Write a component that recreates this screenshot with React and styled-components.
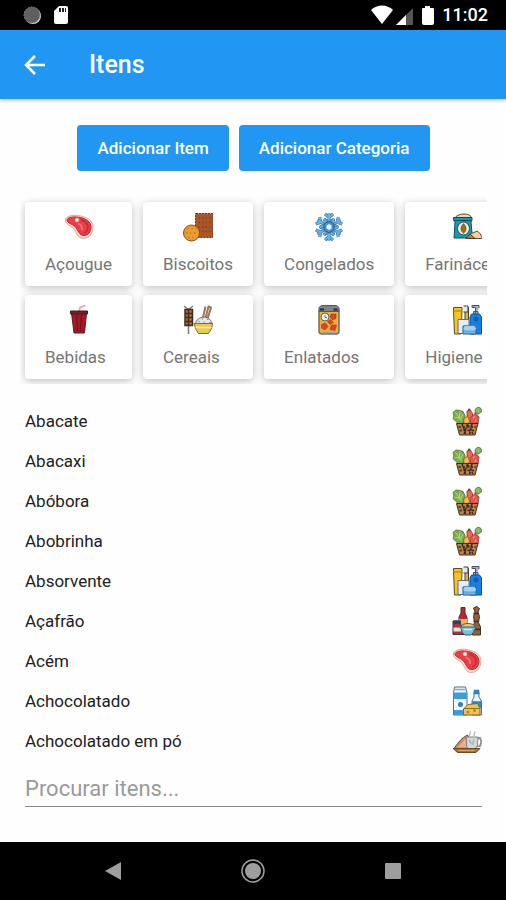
import React from 'react'
import styled, { createGlobalStyle } from 'styled-components'

const GlobalStyle = createGlobalStyle`
    *{
        box-sizing: border-box;
    }
    body{
        margin: 0;
        background: #fefefe;
        font-family: Roboto, "Liberation Sans", sans-serif;
    }
    button, input{
        font-family: inherit;
        margin: 0;
        border: 0;
    }
`;

function Steak() {
  return (
    <Icon viewBox="0 0 60 60">
      <path d="M3 14C7 6 23 5 34 8c13 3 24 10 24 21 0 14-8 24-19 24-13 0-13-12-20-20C14 27 1 25 3 14z" fill="#fbe0c4" stroke="#b9605a" strokeWidth="1" />
      <path d="M6 15c4-6 17-6 27-4 12 3 21 9 21 19 0 10-6 17-14 17-10 0-11-10-18-18C17 24 5 22 6 15z" fill="#e8404a" stroke="#c5202e" strokeWidth="2" />
      <path d="M34 15c9 4 15 9 14 17-1 6-4 9-8 9" fill="none" stroke="#c42436" strokeWidth="3" />
      <path d="M28 23c5 2 9 7 8 13" fill="none" stroke="#f57a7a" strokeWidth="3" />
      <circle cx="26" cy="16" r="4" fill="#fff3e6" stroke="#d98b80" strokeWidth="1" />
    </Icon>
  )
}

function Cookies() {
  return (
    <Icon viewBox="0 0 60 60">
      <rect x="25" y="3" width="35" height="48" rx="1" fill="#a8562a" stroke="#5b3826" strokeWidth="2" strokeDasharray="4 2" />
      <path d="M31 12h24M31 21h24M31 30h24M31 39h24" stroke="#8a431f" strokeWidth="3" strokeDasharray="3 4" />
      <circle cx="17" cy="42" r="16" fill="#eb9c2f" stroke="#805020" strokeWidth="2" />
      <path d="M9 33h18M6 42h24M10 51h16" stroke="#c97a22" strokeWidth="3" strokeDasharray="3 5" />
    </Icon>
  )
}

const flakeAngles = [0, 60, 120, 180, 240, 300];

function Snowflake() {
  return (
    <Icon viewBox="0 0 60 60">
      {flakeAngles.map((angle) => (
        <g key={angle} transform={`rotate(${angle} 30 30)`} fill="none">
          <path d="M30 23V3M22 4l8 7 8-7M20 14l10 8 10-8" stroke="#3c678c" strokeWidth="6" />
          <path d="M30 23V3M22 4l8 7 8-7M20 14l10 8 10-8" stroke="#64b3ec" strokeWidth="4" />
        </g>
      ))}
      <path d="M30 18l10 6v12l-10 6-10-6V24z" fill="#4b93d0" stroke="#2c5578" strokeWidth="2" />
      <path d="M30 24l5 3v6l-5 3-5-3v-6z" fill="#e4f5ff" />
    </Icon>
  )
}

function FlourBag() {
  return (
    <Icon viewBox="0 0 60 60">
      <path d="M8 9c5-3 8-5 16-5s11 2 14 5v5H8z" fill="#ead9b4" stroke="#514636" strokeWidth="2" />
      <path d="M3 11h37v5l-2 5 3 31H4l2-31-3-5z" fill="#159bb8" stroke="#164856" strokeWidth="2" />
      <path d="M5 17h33" stroke="#164856" strokeWidth="2" />
      <ellipse cx="23" cy="33" rx="12" ry="13" fill="#f7f0d2" stroke="#274b50" strokeWidth="2" />
      <path d="M23 23c7 7 7 14 0 20-7-6-7-13 0-20z" fill="#9a6b25" stroke="#4f3b1b" />
      <path d="M29 53c5-8 9-11 13-11l8-4c5 3 9 8 11 15z" fill="#f1d598" stroke="#654526" strokeWidth="2" />
      <path d="M28 53l8-9 10 9z" fill="#bf7c36" stroke="#543719" strokeWidth="2" />
    </Icon>
  )
}

function Soda() {
  return (
    <Icon viewBox="0 0 60 60">
      <path d="M30 14l2-9L43 1" fill="none" stroke="#f2a7b1" strokeWidth="4" />
      <path d="M15 16h30l-4 40H20z" fill="#ab1823" stroke="#581b22" strokeWidth="2" />
      <path d="M13 12h34v6H13z" fill="#7d1d27" stroke="#411a22" strokeWidth="2" />
      <path d="M25 20l2 33M35 20l-2 33" stroke="#751722" strokeWidth="3" />
    </Icon>
  )
}

function Grains() {
  return (
    <Icon viewBox="0 0 60 60">
      <path d="M11 10V58M2 2l9 7 9-7" fill="none" stroke="#777b80" strokeWidth="3" />
      <path d="M4 9h15v32H4z" fill="#ad7041" stroke="#432a1b" strokeWidth="3" />
      <path d="M5 17h13M5 25h13M5 33h13M11 10v30" stroke="#432a1b" strokeWidth="3" />
      <path d="M44 30L51 3l5 2-8 26M39 29l6-26" fill="none" stroke="#9b7755" strokeWidth="4" />
      <path d="M25 38c1-9 8-13 17-14 9 1 15 6 16 14z" fill="#e4e7ed" stroke="#676b75" strokeWidth="2" />
      <path d="M31 33h3M37 28h3M41 34h3M48 29h3M52 35h3" stroke="#8b919c" strokeWidth="2" />
      <path d="M22 37h38l-4 12-5 8H31l-5-8z" fill="#e8ca56" stroke="#80672a" strokeWidth="2" />
      <path d="M25 45h32" stroke="#fff1a1" strokeWidth="3" />
    </Icon>
  )
}

function Jar() {
  return (
    <Icon viewBox="0 0 60 60">
      <rect x="10" y="7" width="40" height="51" rx="6" fill="#f5ad31" stroke="#69706c" strokeWidth="3" />
      <path d="M15 1h30l5 4v8H10V5z" fill="#7c858c" stroke="#50585e" strokeWidth="2" />
      <path d="M12 9h8M39 9h8" stroke="#282d34" strokeWidth="4" />
      <g fill="#d5472d" stroke="#912d25">
        <path d="M34 18h10v9l-7 3-5-6zM15 39l8-3 5 7-6 7-7-4zM35 40h10l-3 11-10-2zM27 33l6-4 6 6-7 4z" />
      </g>
      <circle cx="22" cy="24" r="8" fill="#f0f3ed" stroke="#5e6564" strokeWidth="2" />
      <path d="M22 20v5h4" stroke="#777" fill="none" strokeWidth="2" />
      <path d="M16 55h28" stroke="#a2a19c" strokeWidth="3" />
    </Icon>
  )
}

function Toiletries() {
  return (
    <Icon viewBox="0 0 60 60">
      <path d="M3 5h17v6l-2 47H5L3 11z" fill="#f5c423" stroke="#594e2a" strokeWidth="2" />
      <path d="M4 12h15" stroke="#a17c16" strokeWidth="2" />
      <path d="M26 33V5h7v28" fill="#ecb325" stroke="#43433c" strokeWidth="2" />
      <path d="M23 2h9v12h-9" fill="#e2e7e8" stroke="#43433c" strokeWidth="2" />
      <path d="M12 29h22v28H12z" fill="#e5edf4" stroke="#626e79" strokeWidth="2" />
      <path d="M47 19V5h-7V1h14v5M43 13h9v7h-9z" fill="#9fb1c0" stroke="#465665" strokeWidth="2" />
      <path d="M39 18h16l4 6v34H36V24z" fill="#1681e0" stroke="#14518b" strokeWidth="2" />
      <circle cx="48" cy="28" r="5" fill="#0c61b6" />
      <path d="M22 42h26v16H22z" fill="#75b9ee" stroke="#245d96" strokeWidth="2" />
      <path d="M25 41h20l4 6-3 5H25l-3-5z" fill="#a1d4f6" stroke="#316c9e" />
    </Icon>
  )
}

function Basket() {
  return (
    <Icon viewBox="0 0 60 60">
      <path d="M44 24l4-15M31 29L34 7" stroke="#5f702f" strokeWidth="3" />
      <path d="M2 13l6-5 7 1 7 2 4 8-2 13-9 5-8-7-5-5 2-5z" fill="#79ad4e" stroke="#5a8047" strokeWidth="2" />
      <path d="M7 13l13 17M16 11l-2 16M5 23l9 1M22 16l-5 10" stroke="#b9d77b" strokeWidth="2" fill="none" />
      <path d="M46 7l6-5 6 3 1 7-7 4-5-3z" fill="#8bbd60" stroke="#5e7d4c" strokeWidth="2" />
      <path d="M30 10l6-3 5 8-1 22-9-2z" fill="#ef684b" stroke="#91452f" strokeWidth="2" />
      <path d="M31 9l3-5 4 5z" fill="#4c4a3a" />
      <path d="M41 19l7-4 6 7-2 14H38l-2-12z" fill="#e85550" stroke="#a04a45" strokeWidth="2" />
      <path d="M42 24l4-3M45 31l4-3" stroke="#ffb0a0" strokeWidth="2" />
      <path d="M24 24l7-3 4 8-2 9H23z" fill="#f0bb46" stroke="#93642b" strokeWidth="2" />
      <path d="M9 35h43l-6 23H15z" fill="#b9804e" stroke="#3e281d" strokeWidth="2" />
      <path d="M13 42h35M15 49h31M20 36l8 21M31 36l-7 21M40 36l-5 21M32 38l10 18" stroke="#3d291f" strokeWidth="3" strokeDasharray="5 3" />
    </Icon>
  )
}

function Spices() {
  return (
    <Icon viewBox="0 0 60 60">
      <path d="M18 3h8v11l4 9v34H14V22l4-8z" fill="#bb2635" stroke="#503038" strokeWidth="2" />
      <path d="M14 26h16v12H14z" fill="#f0b448" />
      <path d="M43 4l6-3 6 4-3 7 3 9-2 12 4 9v16H41V42l4-9-2-12 3-9z" fill="#93613e" stroke="#443229" strokeWidth="2" />
      <path d="M43 15h11M43 31h11M42 47h14" stroke="#3d2d25" strokeWidth="3" />
      <path d="M2 30h15v7l4 3v17H2V40z" fill="#b52c43" stroke="#3c3442" strokeWidth="2" />
      <path d="M3 29h15v7H3z" fill="#334057" />
      <path d="M3 43h15v8H3z" fill="#e9dfd2" />
      <ellipse cx="32" cy="42" rx="14" ry="7" fill="#e8c585" stroke="#735443" strokeWidth="2" />
      <path d="M17 42h31l-6 12-4 4H26l-5-4z" fill="#78c1d8" stroke="#365d70" strokeWidth="2" />
      <path d="M24 47h16" stroke="#c4e9f1" strokeWidth="3" />
    </Icon>
  )
}

function Dairy() {
  return (
    <Icon viewBox="0 0 60 60">
      <path d="M5 2h22l3 11v45H3V13z" fill="#f3f8fc" stroke="#536e87" strokeWidth="2" />
      <path d="M3 13h27v13H3zM4 48h25v10H4z" fill="#399dde" />
      <path d="M5 7h22" stroke="#82abc9" strokeWidth="3" />
      <circle cx="17" cy="37" r="5" fill="#3879b7" />
      <path d="M44 13h10v9l5 8v28H40V30l4-8z" fill="#e5f4fb" stroke="#4a7690" strokeWidth="2" />
      <path d="M44 8h10v8H44zM41 31h17v12H41z" fill="#298bd3" stroke="#3f6c87" />
      <path d="M23 46l9-9 19-2 5 9v14H23z" fill="#f1c44a" stroke="#81632c" strokeWidth="2" />
      <path d="M23 45h32" stroke="#926e2b" strokeWidth="2" />
      <circle cx="32" cy="52" r="3" fill="#b98629" />
      <circle cx="45" cy="49" r="3" fill="#b98629" />
    </Icon>
  )
}

function Cocoa() {
  return (
    <Icon viewBox="0 0 60 60">
      <path d="M5 44C13 31 20 24 31 18l7 12-4 17H10z" fill="#d38a6a" stroke="#61483d" strokeWidth="2" />
      <path d="M11 43l17-18 3 17z" fill="#efad90" />
      <path d="M49 24h7l3 7-3 9-9 1" fill="none" stroke="#8e9498" strokeWidth="4" />
      <path d="M29 22h23l-1 17-6 8H34l-5-7z" fill="#d3d8da" stroke="#7d868c" strokeWidth="2" />
      <path d="M34 28l5 8M44 26l-3 12" stroke="#aeb5b9" strokeWidth="3" />
      <path d="M36 20c-4-4 3-5 0-9M45 20c-4-4 3-5 0-9" fill="none" stroke="#b7bcc0" strokeWidth="3" />
      <path d="M2 45h54l-8 8H11z" fill="#a76c34" stroke="#6e4a26" strokeWidth="2" />
      <path d="M13 49h32" stroke="#e1aa55" strokeWidth="2" />
    </Icon>
  )
}

const categories = [
  { name: 'Açougue', icon: Steak },
  { name: 'Bebidas', icon: Soda },
  { name: 'Biscoitos', icon: Cookies },
  { name: 'Cereais', icon: Grains },
  { name: 'Congelados', icon: Snowflake },
  { name: 'Enlatados', icon: Jar },
  { name: 'Farináceos', icon: FlourBag },
  { name: 'Higiene', icon: Toiletries },
];

const items = [
  { name: 'Abacate', icon: Basket },
  { name: 'Abacaxi', icon: Basket },
  { name: 'Abóbora', icon: Basket },
  { name: 'Abobrinha', icon: Basket },
  { name: 'Absorvente', icon: Toiletries },
  { name: 'Açafrão', icon: Spices },
  { name: 'Acém', icon: Steak },
  { name: 'Achocolatado', icon: Dairy },
  { name: 'Achocolatado em pó', icon: Cocoa },
];

function StatusBar() {
  return (
    <StatusBarStyled>
      <div className="status-group">
        <svg width="20" height="20" viewBox="0 0 20 20">
          <circle cx="11" cy="11" r="8" fill="#e0e0e0" />
          <circle cx="10" cy="10" r="8" fill="#606060" stroke="#858585" strokeDasharray="2 1" />
        </svg>
        <svg width="14" height="20" viewBox="0 0 14 20">
          <path d="M5 1h7q2 0 2 2v14q0 2-2 2H2q-2 0-2-2V6z" fill="#fff" />
          <path d="M5 3h2v4H5zM8 3h2v4H8zM11 3h1v4h-1z" fill="#222" />
        </svg>
      </div>
      <div className="status-group">
        <svg width="66" height="20" viewBox="0 0 66 20">
          <path d="M1 5C7-1 17-1 23 5L12 19z" fill="#fff" />
          <path d="M43 3v17H26z" fill="#555" />
          <path d="M36 10v10H26z" fill="#fff" />
          <path d="M55 1h5v2h3q1 0 1 1v14q0 2-2 2h-8q-2 0-2-2V4q0-1 1-1h2z" fill="#fff" />
        </svg>
        <time>11:02</time>
      </div>
    </StatusBarStyled>
  )
}

function App() {
  return (
    <Screen>
      <GlobalStyle />
      <StatusBar />
      <Header>
        <BackButton aria-label="Voltar">
          <svg width="22" height="22" viewBox="0 0 22 22" fill="none" stroke="#fff" strokeWidth="2.5">
            <path d="M11 2l-9 9 9 9M2 11h19" />
          </svg>
        </BackButton>
        <h1>Itens</h1>
      </Header>
      <Content>
        <Actions>
          <ActionButton>Adicionar Item</ActionButton>
          <ActionButton>Adicionar Categoria</ActionButton>
        </Actions>
        <Categories>
          {categories.map(({ name, icon: Picture }) => (
            <CategoryCard key={name}>
              <Picture />
              <span>{name}</span>
            </CategoryCard>
          ))}
        </Categories>
        <ItemList>
          {items.map(({ name, icon: Picture }) => (
            <ItemRow key={name}>
              <span>{name}</span>
              <Picture />
            </ItemRow>
          ))}
        </ItemList>
        <SearchBox>
          <input type="text" placeholder="Procurar itens..." aria-label="Procurar itens" />
        </SearchBox>
      </Content>
      <NavBar>
        <NavButton aria-label="Voltar">
          <svg width="24" height="24" viewBox="0 0 24 24"><path d="M4 12l16-9v18z" fill="#9e9e9e" /></svg>
        </NavButton>
        <NavButton aria-label="Início">
          <svg width="24" height="24" viewBox="0 0 24 24">
            <circle cx="12" cy="12" r="11" fill="none" stroke="#9e9e9e" strokeWidth="1.5" />
            <circle cx="12" cy="12" r="8" fill="#9e9e9e" />
          </svg>
        </NavButton>
        <NavButton aria-label="Recentes">
          <svg width="24" height="24" viewBox="0 0 24 24"><rect x="4" y="4" width="16" height="16" rx="1" fill="#9e9e9e" /></svg>
        </NavButton>
      </NavBar>
    </Screen>
  )
}

const Icon = styled.svg`
    display: block;
    flex: none;
    width: 30px;
    height: 30px;
`;

const Screen = styled.div`
    display: flex;
    flex-direction: column;
    min-height: 100vh;
`;

const StatusBarStyled = styled.div`
    display: flex;
    align-items: center;
    justify-content: space-between;
    height: 30px;
    padding: 0 18px 0 22px;
    background: #000;
    color: #fff;
    .status-group{
        display: flex;
        align-items: center;
        gap: 12px;
    }
    .status-group:last-child{
        gap: 6px;
    }
    time{
        font-size: 18px;
        font-weight: 500;
        line-height: 24px;
    }
`;

const Header = styled.header`
    display: flex;
    align-items: center;
    gap: 43px;
    height: 69px;
    padding: 0 24px;
    background: #2196f3;
    box-shadow: 0 1px 4px rgba(0, 0, 0, 0.3);
    h1{
        margin: 0;
        color: #fff;
        font-size: 25px;
        font-weight: 500;
        line-height: 32px;
    }
`;

const BackButton = styled.button`
    display: flex;
    padding: 0;
    background: none;
`;

const Content = styled.main`
    flex: 1;
    padding: 26px 19px 26px 20px;
`;

const Actions = styled.div`
    display: flex;
    justify-content: center;
    gap: 10px;
`;

const ActionButton = styled.button`
    height: 46px;
    padding: 0 20px;
    border-radius: 4px;
    background: #2196f3;
    color: #fff;
    font-size: 17px;
    font-weight: 500;
    white-space: nowrap;
`;

const Categories = styled.div`
    display: grid;
    grid-template-rows: repeat(2, auto);
    grid-auto-flow: column;
    grid-auto-columns: max-content;
    gap: 9px 11px;
    margin-top: 26px;
    padding: 5px;
    overflow-x: auto;
    scrollbar-width: none;
`;

const CategoryCard = styled.button`
    display: flex;
    flex-direction: column;
    align-items: center;
    gap: 10px;
    padding: 10px 20px;
    border-radius: 4px;
    background: #fff;
    box-shadow: 0 2px 8px rgba(0, 0, 0, 0.25);
    color: #757575;
    font-size: 17px;
    line-height: 24px;
    span{
        align-self: flex-start;
    }
`;

const ItemList = styled.ul`
    margin: 17px 0 0;
    padding: 0 5px;
    list-style: none;
`;

const ItemRow = styled.li`
    display: flex;
    align-items: center;
    justify-content: space-between;
    height: 40px;
    color: #212121;
    font-size: 17px;
    line-height: 24px;
`;

const SearchBox = styled.div`
    padding: 0 5px;
    input{
        display: block;
        width: 100%;
        height: 46px;
        padding: 10px 0 0;
        border-bottom: 1px solid #8a8a8a;
        border-radius: 0;
        outline: none;
        background: none;
        color: #212121;
        font-size: 22px;
    }
    input::placeholder{
        color: #9a9a9a;
        opacity: 1;
    }
`;

const NavBar = styled.nav`
    display: flex;
    align-items: center;
    justify-content: center;
    gap: 116px;
    height: 58px;
    background: #000;
`;

const NavButton = styled.button`
    display: flex;
    padding: 0;
    background: none;
`;

export default App;
